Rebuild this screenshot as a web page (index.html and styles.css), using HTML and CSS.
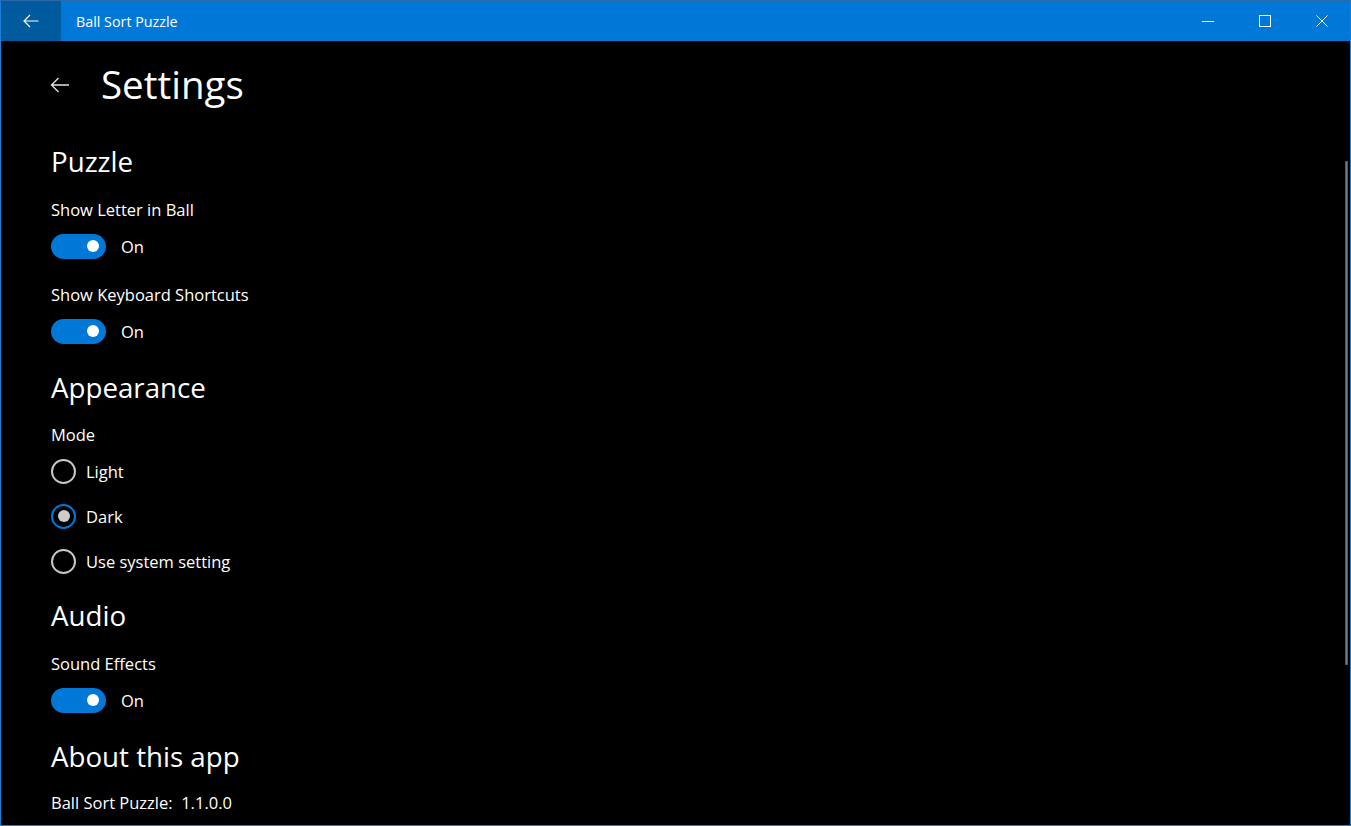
FILE: index.html
```html
<!DOCTYPE html>
<html>
<head>
<meta charset="utf-8">
<link rel="stylesheet" href="styles.css">
</head>
<body>
<div class="window">
  <div class="titlebar">
    <div class="tb-back">
      <svg width="16" height="14" viewBox="0 0 16 14"><path d="M15.5 7H1M7 1L1 7l6 6" fill="none" stroke="#fff" stroke-width="1.2"/></svg>
    </div>
    <div class="tb-title">Ball Sort Puzzle</div>
    <div class="tb-caption">
      <div class="cap-btn"><svg width="12" height="12" viewBox="0 0 12 12"><path d="M0 6.5h12" stroke="#fff" stroke-width="1"/></svg></div>
      <div class="cap-btn"><svg width="12" height="12" viewBox="0 0 12 12"><rect x="0.5" y="0.5" width="11" height="11" fill="none" stroke="#fff" stroke-width="1"/></svg></div>
      <div class="cap-btn"><svg width="12" height="12" viewBox="0 0 12 12"><path d="M0.5 0.5l11 11M11.5 0.5l-11 11" stroke="#fff" stroke-width="1"/></svg></div>
    </div>
  </div>
  <div class="content">
    <div class="page-header">
      <svg class="page-back" width="20" height="16" viewBox="0 0 20 16"><path d="M19 8H1.5M8.5 1L1.5 8l7 7" fill="none" stroke="#e6e6e6" stroke-width="1.3"/></svg>
      <h1 class="page-title">Settings</h1>
    </div>

    <h2 class="section first">Puzzle</h2>
    <div class="label">Show Letter in Ball</div>
    <div class="toggle-row"><span class="toggle"><span class="knob"></span></span><span class="toggle-text">On</span></div>
    <div class="label next">Show Keyboard Shortcuts</div>
    <div class="toggle-row"><span class="toggle"><span class="knob"></span></span><span class="toggle-text">On</span></div>

    <h2 class="section">Appearance</h2>
    <div class="label mode">Mode</div>
    <div class="radio-row first-radio"><span class="radio"></span><span class="radio-text">Light</span></div>
    <div class="radio-row"><span class="radio checked"><span class="dot"></span></span><span class="radio-text">Dark</span></div>
    <div class="radio-row"><span class="radio"></span><span class="radio-text">Use system setting</span></div>

    <h2 class="section audio">Audio</h2>
    <div class="label">Sound Effects</div>
    <div class="toggle-row"><span class="toggle"><span class="knob"></span></span><span class="toggle-text">On</span></div>

    <h2 class="section">About this app</h2>
    <div class="label version">Ball Sort Puzzle:&nbsp; 1.1.0.0</div>
  </div>
  <div class="scrollbar"></div>
</div>
</body>
</html>
```
FILE: styles.css
```css
* { box-sizing: border-box; }
html, body { margin: 0; padding: 0; }
body {
  width: 1351px;
  height: 826px;
  overflow: hidden;
  background: #000;
  font-family: "Segoe UI", "Open Sans", "Noto Sans", sans-serif;
  color: #fff;
}
.window {
  position: relative;
  width: 1351px;
  height: 826px;
  border: 1px solid #1a7fd6;
  border-top-color: #2a6aa8;
  display: flex;
  flex-direction: column;
  background: #000;
}
.titlebar {
  height: 40px;
  flex: 0 0 40px;
  background: #0078d7;
  display: flex;
  align-items: stretch;
}
.tb-back {
  width: 60px;
  background: #005a9e;
  display: flex;
  align-items: center;
  justify-content: center;
}
.tb-title {
  flex: 1;
  display: flex;
  align-items: center;
  padding-left: 15px;
  font-size: 14.3px;
  color: #fff;
}
.tb-caption { display: flex; }
.cap-btn {
  width: 57px;
  display: flex;
  align-items: center;
  justify-content: center;
}
.content {
  flex: 1;
  padding-left: 50px;
  display: flex;
  flex-direction: column;
  align-items: flex-start;
}
.page-header {
  margin-top: 19px;
  height: 48px;
  display: flex;
  align-items: center;
}
.page-back { margin-left: -1px; margin-right: 31px; margin-top: 2px; }
.page-title {
  margin: 0;
  font-size: 38.5px;
  font-weight: 400;
  line-height: 48px;
}
.section {
  margin: 22px 0 1px 0;
  font-size: 27.7px;
  font-weight: 400;
  line-height: 40px;
  height: 40px;
}
.section.first { margin-top: 33px; }
.section.audio { margin-top: 20px; }
.label {
  margin-top: 16px;
  font-size: 16.5px;
  line-height: 24px;
  height: 24px;
}
.label.next { margin-top: 23px; }
.label.mode { margin-top: 15px; }
.label.version { margin-top: 14px; }
.toggle-row {
  margin-top: 10px;
  height: 28px;
  display: flex;
  align-items: center;
}
.toggle {
  width: 55px;
  height: 25px;
  border-radius: 13px;
  background: #0078d7;
  position: relative;
  display: block;
}
.knob {
  position: absolute;
  width: 12px;
  height: 12px;
  border-radius: 50%;
  background: #fff;
  right: 7px;
  top: 6.5px;
}
.toggle-text {
  margin-left: 15px;
  font-size: 16.5px;
}
.radio-row {
  margin-top: 17px;
  height: 28px;
  display: flex;
  align-items: center;
}
.radio-row.first-radio { margin-top: 10px; }
.radio {
  width: 25px;
  height: 25px;
  border-radius: 50%;
  border: 2.5px solid #c8c8c8;
  display: flex;
  align-items: center;
  justify-content: center;
}
.radio.checked { border-color: #0078d7; }
.dot {
  width: 12px;
  height: 12px;
  border-radius: 50%;
  background: #cccccc;
}
.radio-text {
  margin-left: 10px;
  font-size: 16.5px;
}
.scrollbar {
  position: absolute;
  left: 1344px;
  top: 160px;
  width: 3px;
  height: 504px;
  background: #7a7a7a;
  border: 0.5px solid #555;
}
```
